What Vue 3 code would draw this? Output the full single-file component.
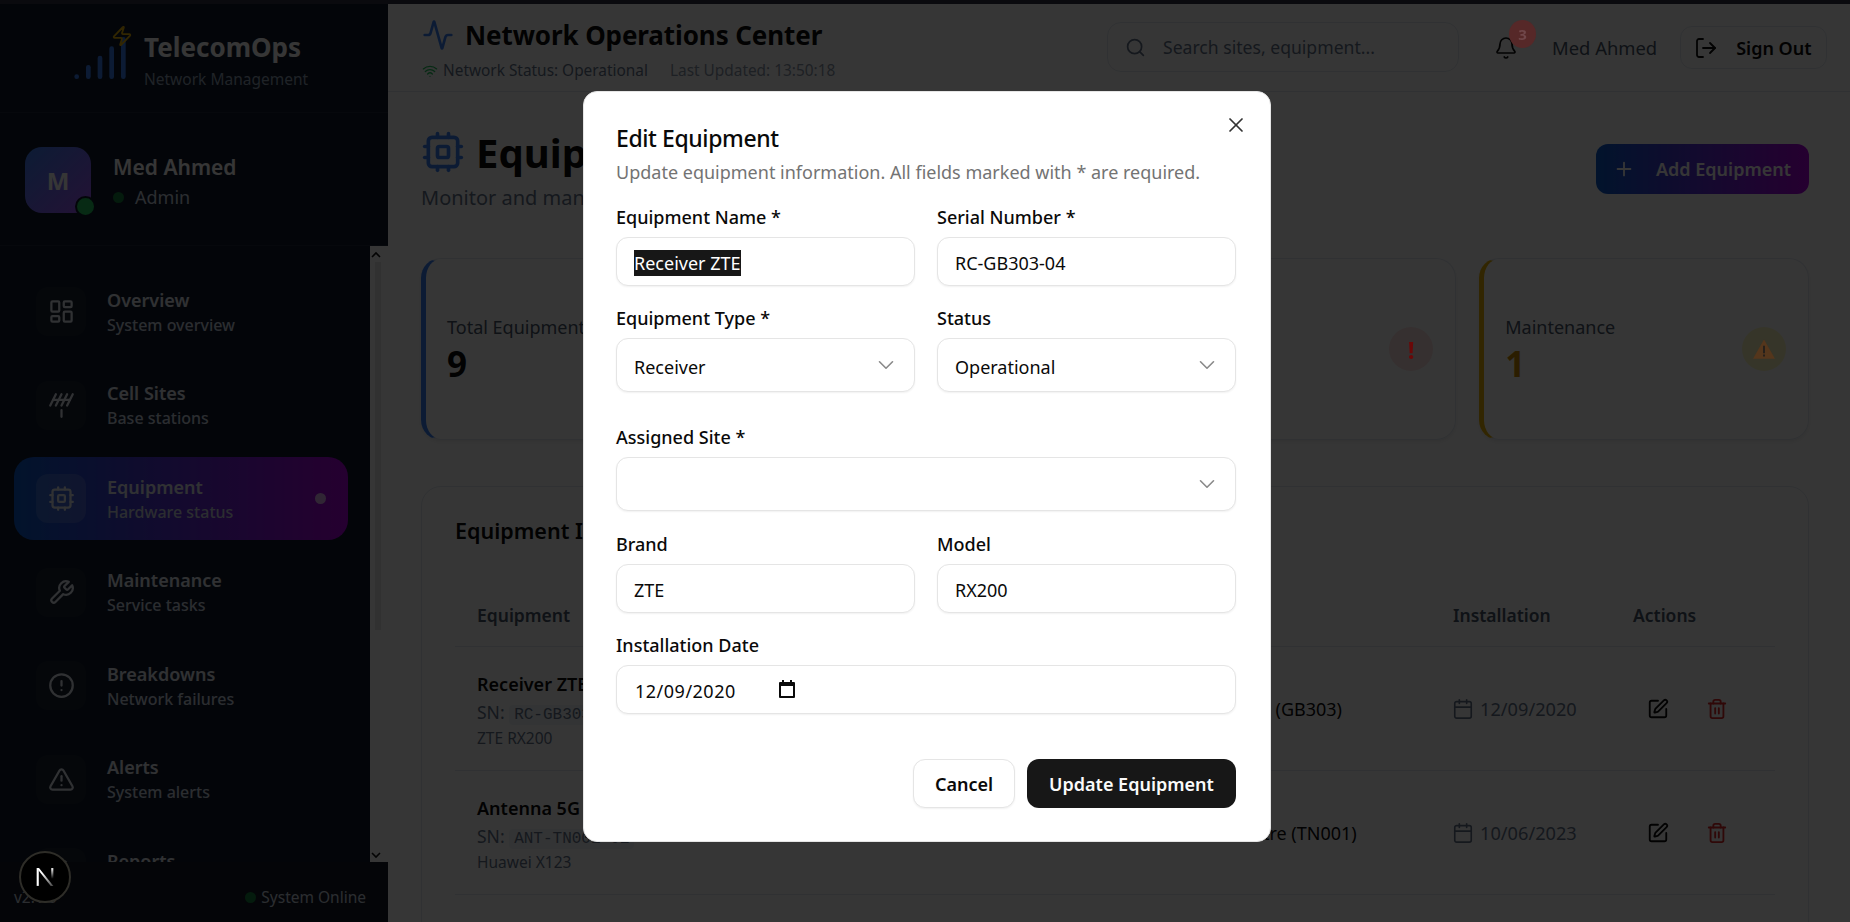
<template>
  <div class="page">
    <div class="strip" />
    <div class="shell">
      <aside class="sidebar">
        <div class="brand">
          <div class="brand-mark">
            <Icon name="signal" class="mark-signal" />
            <Icon name="zap" class="mark-zap" />
          </div>
          <div class="brand-text">
            <div class="brand-name">TelecomOps</div>
            <div class="brand-sub">Network Management</div>
          </div>
        </div>
        <div class="user">
          <div class="avatar">M<span class="avatar-dot" /></div>
          <div class="user-text">
            <div class="user-name">Med Ahmed</div>
            <div class="user-role"><span class="role-dot" />Admin</div>
          </div>
        </div>
        <div class="nav-wrap">
          <nav class="nav">
            <a v-for="item in navItems" :key="item.label" class="nav-item" :class="{ active: item.active }">
              <span class="nav-icon"><Icon :name="item.icon" /></span>
              <span class="nav-text">
                <span class="nav-label">{{ item.label }}</span>
                <span class="nav-sub">{{ item.sub }}</span>
              </span>
              <span v-if="item.active" class="nav-dot" />
            </a>
          </nav>
          <div class="scrollbar">
            <svg class="sb-arrow" viewBox="0 0 12 8"><path d="M2 6l4-4 4 4" /></svg>
            <div class="sb-thumb" />
            <svg class="sb-arrow sb-down" viewBox="0 0 12 8"><path d="M2 2l4 4 4-4" /></svg>
          </div>
        </div>
        <div class="side-foot">
          <span class="version">v2.1.0</span>
          <span class="online"><span class="online-dot" />System Online</span>
        </div>
      </aside>

      <main class="main">
        <header class="topbar">
          <div class="topbar-left">
            <div class="topbar-title">
              <Icon name="activity" class="pulse" />
              <h1>Network Operations Center</h1>
            </div>
            <div class="topbar-status">
              <Icon name="wifi" class="wifi" />
              <span>Network Status: Operational</span>
              <span class="updated">Last Updated: 13:50:18</span>
            </div>
          </div>
          <div class="search">
            <Icon name="search" class="search-icon" />
            <span>Search sites, equipment...</span>
          </div>
          <div class="bell">
            <Icon name="bell" />
            <span class="badge">3</span>
          </div>
          <span class="top-user">Med Ahmed</span>
          <button class="signout"><Icon name="logout" />Sign Out</button>
        </header>

        <div class="content">
          <section class="page-head">
            <div>
              <div class="page-title">
                <Icon name="cpu" class="page-icon" />
                <h2>Equipment Management</h2>
              </div>
              <p class="page-sub">Monitor and manage network equipment</p>
            </div>
            <button class="add-btn"><Icon name="plus" />Add Equipment</button>
          </section>

          <section class="stats">
            <div v-for="s in stats" :key="s.label" class="stat" :class="s.tone">
              <div class="stat-text">
                <div class="stat-label">{{ s.label }}</div>
                <div class="stat-value">{{ s.value }}</div>
              </div>
              <div class="stat-icon">
                <span v-if="s.tone === 'red'" class="bang">!</span>
                <svg v-else-if="s.tone === 'amber'" class="warn" viewBox="0 0 24 21">
                  <path d="M12 0L24 21H0z" />
                  <path class="warn-bang" d="M12 7v8M12 16.6v2.2" />
                </svg>
                <Icon v-else name="cpu" />
              </div>
            </div>
          </section>

          <section class="inventory">
            <h3>Equipment Inventory</h3>
            <div class="row head">
              <span>Equipment</span>
              <span>Type</span>
              <span>Status</span>
              <span>Site</span>
              <span>Installation</span>
              <span>Actions</span>
            </div>
            <div v-for="r in rows" :key="r.serial" class="row">
              <div class="eq">
                <div class="eq-name">{{ r.name }}</div>
                <div class="eq-serial">SN: <code>{{ r.serial }}</code></div>
                <div class="eq-model">{{ r.model }}</div>
              </div>
              <span class="mid">{{ r.type }}</span>
              <span class="mid">Operational</span>
              <span class="site">{{ r.site }}</span>
              <span class="date"><Icon name="calendar" />{{ r.date }}</span>
              <span class="actions">
                <Icon name="edit" class="edit" />
                <Icon name="trash" class="trash" />
              </span>
            </div>
          </section>
        </div>
      </main>
    </div>

    <div class="nextjs">
      <svg viewBox="0 0 18 18" width="20" height="20">
        <defs>
          <linearGradient id="n-fade" x1="0" y1="0" x2="1" y2="1">
            <stop offset="0.3" stop-color="#fff" />
            <stop offset="1" stop-color="#fff" stop-opacity="0.25" />
          </linearGradient>
          <linearGradient id="n-stem" x1="0" y1="0" x2="0" y2="1">
            <stop offset="0" stop-color="#fff" />
            <stop offset="0.8" stop-color="#fff" stop-opacity="0" />
          </linearGradient>
        </defs>
        <path d="M1.5 1h1.9v16H1.5z" fill="#fff" />
        <path d="M1.5 1h2.1l13 16h-2.4z" fill="url(#n-fade)" />
        <path d="M14.6 1h1.9v12h-1.9z" fill="url(#n-stem)" />
      </svg>
    </div>

    <div class="overlay">
      <div class="modal">
        <Icon name="x" class="close" />
        <h2 class="modal-title">Edit Equipment</h2>
        <p class="modal-desc">Update equipment information. All fields marked with * are required.</p>

        <div class="form">
          <label class="field">
            <span class="label">Equipment Name *</span>
            <span class="input"><span class="selected">Receiver ZTE</span></span>
          </label>
          <label class="field">
            <span class="label">Serial Number *</span>
            <span class="input">RC-GB303-04</span>
          </label>
          <label class="field">
            <span class="label">Equipment Type *</span>
            <span class="input select">Receiver<Icon name="chevron" /></span>
          </label>
          <label class="field">
            <span class="label">Status</span>
            <span class="input select">Operational<Icon name="chevron" /></span>
          </label>
          <label class="field wide site-field">
            <span class="label">Assigned Site *</span>
            <span class="input select"><i />
              <Icon name="chevron" />
            </span>
          </label>
          <label class="field">
            <span class="label">Brand</span>
            <span class="input">ZTE</span>
          </label>
          <label class="field">
            <span class="label">Model</span>
            <span class="input">RX200</span>
          </label>
          <label class="field wide">
            <span class="label">Installation Date</span>
            <span class="input date-input">
              12/09/2020
              <svg class="date-cal" viewBox="0 0 18 18">
                <path d="M4 0h2v2h6V0h2v2h2a1 1 0 0 1 1 1v14a1 1 0 0 1-1 1H2a1 1 0 0 1-1-1V3a1 1 0 0 1 1-1h2zM3 6v10h12V6z" />
              </svg>
            </span>
          </label>
        </div>

        <div class="modal-foot">
          <button class="btn-cancel">Cancel</button>
          <button class="btn-update">Update Equipment</button>
        </div>
      </div>
    </div>
  </div>
</template>

<script setup>
import { h } from 'vue';

const icons = {
  signal: ['M2 20h.01', 'M7 20v-4', 'M12 20v-8', 'M17 20V8', 'M22 4v16'],
  zap: ['M4 14a1 1 0 0 1-.78-1.63l9.9-10.2a.5.5 0 0 1 .86.46l-1.92 6.02A1 1 0 0 0 13 10h7a1 1 0 0 1 .78 1.63l-9.9 10.2a.5.5 0 0 1-.86-.46l1.92-6.02A1 1 0 0 0 11 14z'],
  dashboard: ['M4 3h5a1 1 0 0 1 1 1v7a1 1 0 0 1-1 1H4a1 1 0 0 1-1-1V4a1 1 0 0 1 1-1z', 'M15 3h5a1 1 0 0 1 1 1v3a1 1 0 0 1-1 1h-5a1 1 0 0 1-1-1V4a1 1 0 0 1 1-1z', 'M15 12h5a1 1 0 0 1 1 1v7a1 1 0 0 1-1 1h-5a1 1 0 0 1-1-1v-7a1 1 0 0 1 1-1z', 'M4 16h5a1 1 0 0 1 1 1v3a1 1 0 0 1-1 1H4a1 1 0 0 1-1-1v-3a1 1 0 0 1 1-1z'],
  antenna: ['M2 12 7 2', 'm7 12 5-10', 'm12 12 5-10', 'm17 12 5-10', 'M4.5 7h15', 'M12 16v6'],
  cpu: ['M6 4h12a2 2 0 0 1 2 2v12a2 2 0 0 1-2 2H6a2 2 0 0 1-2-2V6a2 2 0 0 1 2-2z', 'M10 9h4a1 1 0 0 1 1 1v4a1 1 0 0 1-1 1h-4a1 1 0 0 1-1-1v-4a1 1 0 0 1 1-1z', 'M15 2v2', 'M15 20v2', 'M2 15h2', 'M2 9h2', 'M20 15h2', 'M20 9h2', 'M9 2v2', 'M9 20v2'],
  wrench: ['M14.7 6.3a1 1 0 0 0 0 1.4l1.6 1.6a1 1 0 0 0 1.4 0l3.77-3.77a6 6 0 0 1-7.94 7.94l-6.91 6.91a2.12 2.12 0 0 1-3-3l6.91-6.91a6 6 0 0 1 7.94-7.94l-3.76 3.76z'],
  alertCircle: ['M12 2a10 10 0 1 0 0 20a10 10 0 1 0 0-20z', 'M12 8v4', 'M12 16h.01'],
  alertTriangle: ['m21.73 18-8-14a2 2 0 0 0-3.48 0l-8 14A2 2 0 0 0 4 21h16a2 2 0 0 0 1.73-3', 'M12 9v4', 'M12 17h.01'],
  report: ['M15 2H6a2 2 0 0 0-2 2v16a2 2 0 0 0 2 2h12a2 2 0 0 0 2-2V7z', 'M14 2v4a2 2 0 0 0 2 2h4'],
  activity: ['M22 12h-2.48a2 2 0 0 0-1.93 1.46l-2.35 8.36a.25.25 0 0 1-.48 0L9.24 2.18a.25.25 0 0 0-.48 0l-2.35 8.36A2 2 0 0 1 4.49 12H2'],
  wifi: ['M12 20h.01', 'M2 8.82a15 15 0 0 1 20 0', 'M5 12.859a10 10 0 0 1 14 0', 'M8.5 16.429a5 5 0 0 1 7 0'],
  search: ['M11 3a8 8 0 1 0 0 16a8 8 0 1 0 0-16z', 'm21 21-4.3-4.3'],
  bell: ['M10.268 21a2 2 0 0 0 3.464 0', 'M3.262 15.326A1 1 0 0 0 4 17h16a1 1 0 0 0 .74-1.673C19.41 13.956 18 12.499 18 8A6 6 0 0 0 6 8c0 4.499-1.411 5.956-2.738 7.326'],
  logout: ['m16 17 5-5-5-5', 'M21 12H9', 'M9 21H5a2 2 0 0 1-2-2V5a2 2 0 0 1 2-2h4'],
  plus: ['M5 12h14', 'M12 5v14'],
  calendar: ['M8 2v4', 'M16 2v4', 'M5 4h14a2 2 0 0 1 2 2v14a2 2 0 0 1-2 2H5a2 2 0 0 1-2-2V6a2 2 0 0 1 2-2z', 'M3 10h18'],
  edit: ['M12 3H5a2 2 0 0 0-2 2v14a2 2 0 0 0 2 2h14a2 2 0 0 0 2-2v-7', 'M18.375 2.625a1 1 0 0 1 3 3l-9.013 9.014a2 2 0 0 1-.853.505l-2.873.84a.5.5 0 0 1-.62-.62l.84-2.873a2 2 0 0 1 .506-.852z'],
  trash: ['M3 6h18', 'M19 6v14c0 1-1 2-2 2H7c-1 0-2-1-2-2V6', 'M8 6V4c0-1 1-2 2-2h4c1 0 2 1 2 2v2', 'M10 11v6', 'M14 11v6'],
  chevron: ['m6 9 6 6 6-6'],
  x: ['M18 6 6 18', 'm6 6 12 12'],
};

const Icon = (props) =>
  h(
    'svg',
    {
      viewBox: '0 0 24 24',
      fill: 'none',
      stroke: 'currentColor',
      'stroke-width': 2,
      'stroke-linecap': 'round',
      'stroke-linejoin': 'round',
    },
    icons[props.name].map((d) => h('path', { d })),
  );
Icon.props = ['name'];

const navItems = [
  { label: 'Overview', sub: 'System overview', icon: 'dashboard' },
  { label: 'Cell Sites', sub: 'Base stations', icon: 'antenna' },
  { label: 'Equipment', sub: 'Hardware status', icon: 'cpu', active: true },
  { label: 'Maintenance', sub: 'Service tasks', icon: 'wrench' },
  { label: 'Breakdowns', sub: 'Network failures', icon: 'alertCircle' },
  { label: 'Alerts', sub: 'System alerts', icon: 'alertTriangle' },
  { label: 'Reports', sub: 'Analytics', icon: 'report' },
];

const stats = [
  { label: 'Total Equipment', value: 9, tone: 'blue' },
  { label: 'Operational', value: 7, tone: 'green' },
  { label: 'Faulty', value: 1, tone: 'red' },
  { label: 'Maintenance', value: 1, tone: 'amber' },
];

const rows = [
  { name: 'Receiver ZTE', serial: 'RC-GB303-04', model: 'ZTE RX200', type: 'Receiver', site: 'Gabes Sud (GB303)', date: '12/09/2020' },
  { name: 'Antenna 5G Huawei', serial: 'ANT-TN001-01', model: 'Huawei X123', type: 'Antenna', site: 'Tunis Centre (TN001)', date: '10/06/2023' },
  { name: 'Router Cisco', serial: 'RT-TN001-02', model: 'Cisco R900', type: 'Router', site: 'Tunis Centre (TN001)', date: '03/02/2022' },
];
</script>

<style scoped>
.page {
  height: 100vh;
  display: flex;
  flex-direction: column;
  overflow: hidden;
  background: #fff;
  font-family: "Noto Sans", "Open Sans", sans-serif;
  color: #0a0a0a;
}

.strip {
  height: 4px;
  flex-shrink: 0;
  background: #0a0a0e;
}

.shell {
  flex: 1;
  display: flex;
  min-height: 0;
}

/* sidebar */
.sidebar {
  width: 388px;
  flex-shrink: 0;
  display: flex;
  flex-direction: column;
  background: #0f1a2c;
  color: #fff;
}

.brand {
  height: 109px;
  flex-shrink: 0;
  display: flex;
  align-items: center;
  padding-left: 72px;
  gap: 16px;
  border-bottom: 1px solid #1e293b;
  box-sizing: border-box;
}

.brand-text {
  padding-top: 6px;
}

.brand-mark {
  position: relative;
  width: 56px;
  height: 56px;
}

.mark-signal {
  width: 56px;
  height: 56px;
  color: #3b82f6;
}

.mark-zap {
  position: absolute;
  top: -5px;
  right: -5px;
  width: 22px;
  height: 22px;
  color: #eab308;
}

.brand-name {
  font-size: 26px;
  font-weight: 700;
  line-height: 36px;
}

.brand-sub {
  font-size: 15.5px;
  line-height: 28px;
  color: #94a3b8;
}

.user {
  height: 133px;
  flex-shrink: 0;
  display: flex;
  align-items: center;
  gap: 22px;
  padding: 2px 0 0 25px;
  box-sizing: border-box;
  border-bottom: 1px solid #1e293b;
}

.user-text {
  padding-top: 4px;
}

.avatar {
  position: relative;
  width: 66px;
  height: 66px;
  border-radius: 17px;
  background: linear-gradient(135deg, #3b82f6, #a855f7);
  display: flex;
  align-items: center;
  justify-content: center;
  font-size: 24px;
  font-weight: 700;
}

.avatar-dot {
  position: absolute;
  right: -5px;
  bottom: -4px;
  width: 17px;
  height: 17px;
  border-radius: 50%;
  background: #22c55e;
  border: 2px solid #0f1a2c;
}

.user-name {
  font-size: 21px;
  font-weight: 600;
  line-height: 30px;
}

.user-role {
  display: flex;
  align-items: center;
  gap: 11px;
  font-size: 18px;
  line-height: 30px;
  color: #cbd5e1;
}

.role-dot {
  width: 11px;
  height: 11px;
  border-radius: 50%;
  background: #15803d;
}

.nav-wrap {
  flex: 1;
  min-height: 0;
  display: flex;
  overflow: hidden;
}

.nav {
  flex: 1;
  padding: 24px 22px 0 14px;
}

.nav-item {
  display: flex;
  align-items: center;
  height: 83px;
  margin-bottom: 10.5px;
  padding: 0 22px;
  border-radius: 20px;
  gap: 21px;
}

.nav-item.active {
  background: linear-gradient(90deg, #0a5cd0, #b000e0);
}

.nav-icon {
  width: 50px;
  height: 49px;
  flex-shrink: 0;
  display: flex;
  align-items: center;
  justify-content: center;
  border-radius: 12px;
  background: #1a2333;
  color: #e2e8f0;
}

.nav-item.active .nav-icon {
  background: rgba(255, 255, 255, 0.15);
}

.nav-icon svg {
  width: 27px;
  height: 27px;
}

.nav-text {
  flex: 1;
  display: flex;
  flex-direction: column;
}

.nav-label {
  font-size: 18px;
  font-weight: 600;
  line-height: 26px;
  color: #e2e8f0;
}

.nav-sub {
  font-size: 16px;
  font-weight: 500;
  line-height: 24px;
  color: #cbd5e1;
}

.nav-dot {
  width: 11px;
  height: 11px;
  border-radius: 50%;
  background: rgba(255, 255, 255, 0.7);
}

.scrollbar {
  width: 18px;
  box-sizing: border-box;
  padding-right: 6px;
  background: #fff;
  display: flex;
  flex-direction: column;
  align-items: center;
}

.sb-arrow {
  width: 12px;
  height: 8px;
  margin: 5px 0 3px;
  fill: none;
  stroke: #111;
  stroke-width: 1.6;
}

.sb-thumb {
  width: 6px;
  height: 368px;
  margin-left: 4px;
  background: #e6e6e6;
}

.sb-down {
  margin-top: auto;
}

.side-foot {
  height: 60px;
  flex-shrink: 0;
  display: flex;
  align-items: center;
  justify-content: space-between;
  padding: 10px 22px 0 14px;
  box-sizing: border-box;
  background: #131a26;
  font-size: 15.5px;
  color: #cbd5e1;
}

.online {
  display: flex;
  align-items: center;
  gap: 5px;
}

.online-dot {
  width: 11px;
  height: 11px;
  border-radius: 50%;
  background: #15803d;
}

/* main */
.main {
  flex: 1;
  min-width: 0;
  display: flex;
  flex-direction: column;
  overflow: hidden;
}

.topbar {
  height: 88px;
  flex-shrink: 0;
  display: flex;
  align-items: flex-start;
  padding-left: 34px;
  box-sizing: border-box;
  border-bottom: 1px solid #e2e8f0;
}

.topbar-left {
  width: 685px;
  padding-top: 13px;
}

.topbar-title {
  display: flex;
  align-items: center;
  gap: 11px;
  height: 36px;
}

.pulse {
  width: 32px;
  height: 32px;
  color: #3b82f6;
}

h1 {
  margin: 0;
  font-size: 26px;
  font-weight: 700;
  letter-spacing: -0.1px;
}

.topbar-status {
  display: flex;
  align-items: center;
  margin-top: 6px;
  font-size: 15.4px;
  line-height: 24px;
  color: #64748b;
}

.wifi {
  width: 16px;
  height: 16px;
  margin-right: 5px;
  color: #22c55e;
}

.updated {
  margin-left: 22px;
  opacity: 0.75;
}

.search {
  width: 352px;
  height: 50px;
  margin-top: 18px;
  display: flex;
  align-items: center;
  gap: 17px;
  padding-left: 17px;
  box-sizing: border-box;
  border: 1px solid #e2e8f0;
  border-radius: 14px;
  font-size: 17.6px;
  color: #64748b;
}

.search-icon {
  width: 21px;
  height: 21px;
}

.bell {
  position: relative;
  width: 24px;
  height: 24px;
  margin: 32px 0 0 35px;
}

.bell svg {
  width: 24px;
  height: 24px;
  stroke-width: 1.7;
}

.badge {
  position: absolute;
  z-index: 51;
  top: -16px;
  left: 15px;
  width: 27px;
  height: 28px;
  border-radius: 50%;
  background: #562828;
  color: #70474a;
  font-size: 15px;
  font-weight: 700;
  display: flex;
  align-items: center;
  justify-content: center;
}

.top-user {
  margin: 30px 0 0 34px;
  font-size: 18.4px;
  line-height: 28px;
  color: #475569;
}

.signout {
  height: 43px;
  width: 147px;
  margin: 22px 0 0 23px;
  display: flex;
  align-items: center;
  gap: 18px;
  padding: 0 0 0 13px;
  border: 1px solid #e2e8f0;
  border-radius: 12px;
  background: none;
  font: 600 18px "Noto Sans", sans-serif;
  color: #0a0a0a;
}

.signout svg {
  width: 24px;
  height: 24px;
  stroke-width: 1.8;
}

.content {
  padding: 0 41px 0 33px;
}

.page-head {
  display: flex;
  justify-content: space-between;
  align-items: flex-start;
  height: 166px;
}

.page-title {
  display: flex;
  align-items: center;
  gap: 11px;
  margin-top: 35px;
  height: 50px;
}

.page-icon {
  width: 44px;
  height: 44px;
  color: #3b82f6;
}

h2 {
  margin: 0;
}

.page-title h2 {
  font-size: 40px;
  font-weight: 700;
}

.page-sub {
  margin: 7px 0 0;
  font-size: 20px;
  line-height: 28px;
  color: #64748b;
}

.add-btn {
  margin-top: 52px;
  width: 213px;
  height: 50px;
  display: flex;
  align-items: center;
  gap: 21px;
  padding: 0 0 0 17px;
  border: 0;
  border-radius: 12px;
  background: linear-gradient(90deg, #0a5cd0, #b000e0);
  color: #fff;
  font: 600 18px "Noto Sans", sans-serif;
}

.add-btn svg {
  width: 22px;
  height: 22px;
}

.stats {
  display: grid;
  grid-template-columns: repeat(4, 1fr);
  gap: 23px;
}

.stat {
  height: 182px;
  display: flex;
  align-items: center;
  justify-content: space-between;
  box-sizing: border-box;
  padding: 0 22px 0 21px;
  border: 1px solid #e2e8f0;
  border-left: 5px solid #3b82f6;
  border-radius: 20px;
  box-shadow: 0 2px 4px rgba(0, 0, 0, 0.08);
}

.stat-text {
  padding-top: 3px;
}

.stat.green { border-left-color: #22c55e; }
.stat.red { border-left-color: #ef4444; }
.stat.amber { border-left-color: #eab308; }

.stat-label {
  font-size: 18px;
  line-height: 26px;
  color: #475569;
}

.stat-value {
  font-size: 35px;
  font-weight: 700;
  line-height: 46px;
  padding-top: 1px;
}

.amber .stat-value { color: #ca8a04; }
.red .stat-value { color: #dc2626; }
.green .stat-value { color: #16a34a; }

.stat-icon {
  width: 44px;
  height: 44px;
  border-radius: 50%;
  display: flex;
  align-items: center;
  justify-content: center;
  background: #dbeafe;
}

.stat-icon svg {
  width: 24px;
  height: 24px;
}

.red .stat-icon { background: #fee2e2; }
.amber .stat-icon { background: #fef9c3; }
.green .stat-icon { background: #dcfce7; }

.bang {
  position: relative;
  z-index: 51;
  color: #6a0808;
  font-size: 24px;
  font-weight: 700;
}

.stat-icon .warn {
  position: relative;
  z-index: 51;
  width: 22px;
  height: 20px;
  fill: #54361c;
}

.warn-bang {
  fill: none;
  stroke: #1c1c1c;
  stroke-width: 1.8;
}

.inventory {
  margin-top: 46px;
  padding: 0 33px;
  border: 1px solid #e2e8f0;
  border-radius: 20px;
}

h3 {
  margin: 0;
  height: 88px;
  font-size: 21.5px;
  font-weight: 600;
  line-height: 88px;
}

.row {
  display: grid;
  grid-template-columns: 324px 200px 180px 272px 180px 1fr;
  align-items: center;
  height: 123px;
  padding-left: 22px;
  border-bottom: 1px solid #e2e8f0;
  font-size: 18px;
}

.row.head {
  height: 72px;
  box-sizing: border-box;
  padding-top: 9px;
  font-size: 17.5px;
  font-weight: 600;
  color: #475569;
}

.mid {
  margin-bottom: 10px;
  font-size: 16px;
}

.eq {
  padding-top: 2px;
}

.eq-name {
  font-weight: 600;
  line-height: 28px;
}

.eq-serial {
  font-size: 17.5px;
  line-height: 28px;
  color: #64748b;
}

code {
  padding: 1px 5px;
  background: #f1f5f9;
  border-radius: 4px;
  font-family: "Liberation Mono", monospace;
  font-size: 16px;
}

.eq-model {
  margin-top: -2px;
  font-size: 15.5px;
  line-height: 22px;
  color: #64748b;
}

.date {
  display: flex;
  align-items: center;
  gap: 6px;
  margin-left: -1px;
  font-size: 18.2px;
  color: #64748b;
}

.date svg {
  width: 22px;
  height: 22px;
  stroke-width: 1.8;
}

.actions {
  display: flex;
  gap: 37px;
  padding-left: 14px;
}

.actions svg {
  width: 22px;
  height: 22px;
}

.trash {
  color: #dc2626;
}

.nextjs {
  position: fixed;
  left: 19px;
  bottom: 19px;
  z-index: 60;
  width: 52px;
  height: 52px;
  box-sizing: border-box;
  border-radius: 50%;
  background: #000;
  border: 2px solid #2e2d28;
  display: flex;
  align-items: center;
  justify-content: center;
}

/* dialog */
.overlay {
  position: fixed;
  inset: 4px 0 0;
  z-index: 50;
  box-sizing: border-box;
  padding: 0 0 0 4px;
  display: flex;
  align-items: flex-start;
  justify-content: center;
  background: rgba(0, 0, 0, 0.79);
}

.modal {
  position: relative;
  width: 688px;
  margin-top: 87px;
  box-sizing: border-box;
  padding: 30px 34px 33px 32px;
  background: #fff;
  border: 1px solid #e5e5e5;
  border-radius: 14px;
}

.close {
  position: absolute;
  top: 20.5px;
  right: 22.5px;
  width: 24px;
  height: 24px;
  stroke-width: 1.7;
  color: #333;
}

.modal-title {
  font-size: 23px;
  font-weight: 500;
  letter-spacing: -0.4px;
  line-height: 32px;
}

.modal-desc {
  margin: 4px 0 0;
  font-size: 18px;
  line-height: 28px;
  color: #737373;
}

.form {
  display: grid;
  grid-template-columns: 298.5px 298.5px;
  column-gap: 22.5px;
  margin-top: 20px;
}

.field {
  display: flex;
  flex-direction: column;
  margin-bottom: 21px;
}

.field.wide {
  grid-column: 1 / 3;
}

.site-field {
  margin-top: 13px;
  margin-bottom: 21.5px;
}

.label {
  font-size: 18px;
  font-weight: 500;
  line-height: 24px;
  margin: -1px 0 8px;
}

.input {
  height: 49px;
  box-sizing: border-box;
  display: flex;
  align-items: center;
  justify-content: space-between;
  padding: 3px 17px 0;
  border: 1px solid #e5e5e5;
  border-radius: 12px;
  box-shadow: 0 1px 2px rgba(0, 0, 0, 0.06);
  font-size: 18px;
  background: #fff;
}

.select {
  height: 54px;
}

.select svg {
  width: 26px;
  height: 26px;
  margin: -3px -2px 0 0;
  stroke-width: 1.5;
  color: #8a8a8a;
}

.selected {
  line-height: 26px;
  background: #171717;
  color: #fff;
}

.date-input {
  justify-content: flex-start;
  letter-spacing: 0.5px;
  padding-left: 18px;
}

.date-cal {
  width: 18px;
  height: 18px;
  margin: -3px 0 0 42px;
  fill: #0a0a0a;
}

.modal-foot {
  display: flex;
  justify-content: flex-end;
  gap: 12px;
  margin-top: 24px;
}

.modal-foot button {
  height: 49px;
  padding-top: 3px;
  border-radius: 12px;
  font: 600 18px "Noto Sans", sans-serif;
}

.btn-cancel {
  width: 102px;
  border: 1px solid #e5e5e5;
  background: #fff;
  color: #0a0a0a;
  box-shadow: 0 1px 2px rgba(0, 0, 0, 0.06);
}

.btn-update {
  width: 209px;
  border: 0;
  background: #171717;
  color: #fafafa;
}
</style>
